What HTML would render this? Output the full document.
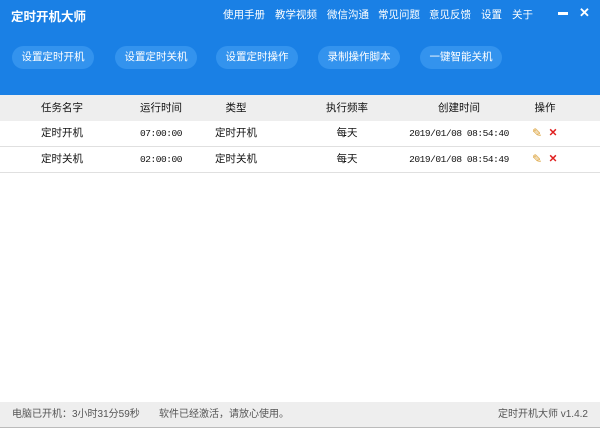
<!DOCTYPE html><html><head><meta charset="utf-8"><style>
*{margin:0;padding:0;box-sizing:border-box}
body{width:600px;height:429px;overflow:hidden;background:#fff;font-family:"Liberation Sans","Noto Sans CJK SC",sans-serif;font-size:11px;color:#111;position:relative}
.top{position:absolute;left:0;top:0;width:600px;height:95px;background:#1a80e5}
.title{position:absolute;left:11px;top:6px;color:#fff;font-weight:bold;font-size:12.5px}
.menu{position:absolute;top:7px;color:#fff;font-size:10.5px}
.btn{position:absolute;top:46px;height:23px;width:82px;border-radius:12px;background:#3393ee;color:#fff;text-align:center;line-height:23px;font-size:10.5px}
.th{position:absolute;top:95px;left:0;width:600px;height:26px;background:#eeeeee}
.row{position:absolute;left:0;width:600px;height:26px;border-bottom:1px solid #e0e0e0}
.c{position:absolute;transform:translateX(-50%);line-height:25px;white-space:nowrap;font-size:10.5px}
.mono{font-family:"Liberation Mono",monospace;font-size:9.5px;letter-spacing:-0.45px}
.status{position:absolute;left:0;top:402px;width:600px;height:26px;background:#eeeeee;border-bottom:1px solid #bbb;color:#555;font-size:10px;line-height:26px}
</style></head><body>
<div class="top">
<div class="title">定时开机大师</div>
<div class="menu" style="left:223px">使用手册</div>
<div class="menu" style="left:275px">教学视频</div>
<div class="menu" style="left:327px">微信沟通</div>
<div class="menu" style="left:378px">常见问题</div>
<div class="menu" style="left:429px">意见反馈</div>
<div class="menu" style="left:481px">设置</div>
<div class="menu" style="left:512px">关于</div>
<div style="position:absolute;left:558px;top:12px;width:10px;height:3px;background:#fff"></div>
<div class="menu" style="left:579px;top:5px;font-size:13px;font-weight:bold">✕</div>
<div class="btn" style="left:12px">设置定时开机</div>
<div class="btn" style="left:115px">设置定时关机</div>
<div class="btn" style="left:216px">设置定时操作</div>
<div class="btn" style="left:318px">录制操作脚本</div>
<div class="btn" style="left:420px">一键智能关机</div>
</div>
<div class="th">
<span class="c" style="left:62px;line-height:26px">任务名字</span>
<span class="c" style="left:161px;line-height:26px">运行时间</span>
<span class="c" style="left:236px;line-height:26px">类型</span>
<span class="c" style="left:347px;line-height:26px">执行频率</span>
<span class="c" style="left:459px;line-height:26px">创建时间</span>
<span class="c" style="left:545px;line-height:26px">操作</span>
</div>
<div class="row" style="top:121px">
<span class="c" style="left:62px">定时开机</span>
<span class="c mono" style="left:161px">07:00:00</span>
<span class="c" style="left:236px">定时开机</span>
<span class="c" style="left:347px">每天</span>
<span class="c mono" style="left:459px">2019/01/08 08:54:40</span>
<span class="c" style="left:537px;color:#d89a2a;font-size:12px">✎</span><span class="c" style="left:553px;color:#e02020;font-weight:bold">✕</span>
</div>
<div class="row" style="top:147px">
<span class="c" style="left:62px">定时关机</span>
<span class="c mono" style="left:161px">02:00:00</span>
<span class="c" style="left:236px">定时关机</span>
<span class="c" style="left:347px">每天</span>
<span class="c mono" style="left:459px">2019/01/08 08:54:49</span>
<span class="c" style="left:537px;color:#d89a2a;font-size:12px">✎</span><span class="c" style="left:553px;color:#e02020;font-weight:bold">✕</span>
</div>
<div class="status">
<span style="position:absolute;left:12px">电脑已开机：3小时31分59秒</span>
<span style="position:absolute;left:159px">软件已经激活，请放心使用。</span>
<span style="position:absolute;right:12px">定时开机大师 v1.4.2</span>
</div>
</body></html>
